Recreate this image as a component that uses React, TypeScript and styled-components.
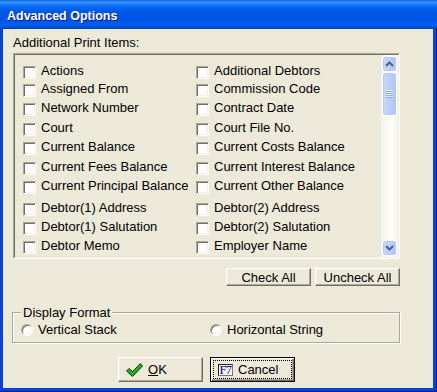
import styled, { createGlobalStyle } from 'styled-components'

const GlobalStyle = createGlobalStyle`
  html, body {
    margin: 0;
    padding: 0;
    background: #ece9d8;
  }
  body {
    font-family: "Liberation Sans", Arial, sans-serif;
    font-size: 13px;
    color: #000;
  }
`

const Window = styled.div`
  width: 437px;
  height: 392px;
  display: flex;
  flex-direction: column;
  background: #0842d6;
  box-shadow: inset -1px -1px 0 #001ea0;
`

const TitleBar = styled.div`
  height: 29px;
  box-sizing: border-box;
  padding: 9px 0 0 7px;
  background: linear-gradient(
    to bottom,
    #0a5ae8 0px,
    #3d95ff 2px,
    #1a80ff 4px,
    #0568f5 7px,
    #0058e6 11px,
    #0054e3 18px,
    #0058ea 22px,
    #0060f2 25px,
    #0052d6 27px,
    #003db5 29px
  );
`

const Title = styled.span`
  display: block;
  font-family: "Liberation Sans", Arial, sans-serif;
  font-weight: 700;
  font-size: 12.5px;
  line-height: 15px;
  color: #fff;
  text-shadow: 1px 1px 0 #0a1883;
`

const Body = styled.div`
  flex: 1;
  margin: 0 4px 4px 3px;
  padding: 6px 33px 0 9px;
  background: #ece9d8;
  display: flex;
  flex-direction: column;
`

const Caption = styled.div`
  margin-left: 1px;
  line-height: 15px;
`

const ListFrame = styled.div`
  margin: 3px 0 0 1px;
  height: 206px;
  box-sizing: border-box;
  border: 1px solid;
  border-color: #aca899 #fff #fff #aca899;
`

const ListInner = styled.div`
  height: 100%;
  box-sizing: border-box;
  border: 1px solid;
  border-color: #716f64 #f1efe2 #f1efe2 #716f64;
  display: flex;
  overflow: hidden;
`

const Items = styled.div`
  flex: 1;
  padding: 8px 0 0 8px;
  display: grid;
  grid-template-columns: 173px 1fr;
  grid-template-rows: 18px 19px 20px 19px 20px 19px 22px 19px 19px 19px;
  align-items: start;
  overflow: hidden;
`

const Item = styled.label`
  display: flex;
  align-items: flex-start;
  white-space: nowrap;
  line-height: 15px;
`

const CheckBox = styled.span`
  flex: none;
  width: 13px;
  height: 13px;
  box-sizing: border-box;
  margin: 3px 5px 0 0;
  background: #fff;
  border: 1px solid;
  border-color: #aca899 #fff #fff #aca899;
  box-shadow: inset 1px 1px 0 #716f64, inset -1px -1px 0 #f1efe2;
`

const ScrollBar = styled.div`
  width: 17px;
  display: flex;
  flex-direction: column;
  align-items: center;
  padding: 1px 0;
  box-sizing: border-box;
  background: linear-gradient(to right, #f3f1ec, #fefefb 60%, #f3f1ec);
`

const ScrollPart = styled.div<{ $h: number }>`
  width: 15px;
  height: ${({ $h }) => $h}px;
  box-sizing: border-box;
  border: 1px solid #fff;
  border-radius: 3px;
  background: linear-gradient(to right, #c9d8fc, #bccffb 50%, #aec4f7);
  box-shadow: inset 0 0 0 1px #b6c9f6;
  display: flex;
  align-items: center;
  justify-content: center;
  flex: none;
`

const Track = styled.div`
  flex: 1;
`

const Grip = styled.div`
  width: 7px;
  height: 8px;
  background: repeating-linear-gradient(
    to bottom,
    #eef3fe 0px,
    #eef3fe 1px,
    #8ca8ee 1px,
    #8ca8ee 2px
  );
`

const ButtonRow = styled.div<{ $top: number; $left?: number }>`
  display: flex;
  gap: ${({ $left }) => ($left ? 7 : 4)}px;
  justify-content: ${({ $left }) => ($left ? 'flex-start' : 'flex-end')};
  margin-top: ${({ $top }) => $top}px;
  padding-left: ${({ $left }) => $left ?? 0}px;
`

const Button = styled.button<{ $h: number; $default?: boolean }>`
  width: 85px;
  height: ${({ $h }) => $h}px;
  box-sizing: border-box;
  padding: 0;
  margin: 0;
  font-family: "Liberation Sans", Arial, sans-serif;
  font-size: 13px;
  line-height: 15px;
  color: #000;
  background: #ece9d8;
  border: 1px solid;
  border-color: ${({ $default }) =>
    $default ? '#000' : '#fff #716f64 #716f64 #fff'};
  box-shadow: ${({ $default }) =>
    $default
      ? 'inset 1px 1px 0 #fff, inset -1px -1px 0 #716f64, inset -2px -2px 0 #aca899'
      : 'inset -1px -1px 0 #aca899, inset 1px 1px 0 #f1efe2'};
  display: flex;
  align-items: stretch;
`

const Face = styled.span<{ $focus?: boolean }>`
  flex: 1;
  margin: 2px;
  padding-left: 4px;
  border: 1px ${({ $focus }) => ($focus ? 'dotted #000' : 'solid transparent')};
  display: flex;
  align-items: center;
  gap: 5px;
`

const CenteredFace = styled.span`
  flex: 1;
  display: flex;
  align-items: center;
  justify-content: center;
`

const KeyCap = styled.span`
  width: 15px;
  height: 12px;
  box-sizing: border-box;
  border: 1px solid;
  border-color: #222 #777 #777 #222;
  background: #f4f3ee;
  font-family: "Liberation Serif", "Times New Roman", serif;
  font-size: 12.5px;
  line-height: 10px;
  letter-spacing: -0.5px;
  color: #000080;
  text-align: center;
  overflow: hidden;
`

const GroupBox = styled.div`
  position: relative;
  margin-top: 26px;
  padding: 9px 0 5px 8px;
  border: 1px solid #aca899;
  box-shadow: inset 1px 1px 0 #fff, 1px 1px 0 #fff;
  display: grid;
  grid-template-columns: 189px 1fr;
`

const Legend = styled.span`
  position: absolute;
  top: -8px;
  left: 8px;
  padding: 0 2px;
  line-height: 15px;
  background: #ece9d8;
`

const Radio = styled.label`
  display: flex;
  align-items: center;
  line-height: 15px;
  white-space: nowrap;
`

const RadioDot = styled.span`
  flex: none;
  width: 12px;
  height: 12px;
  box-sizing: border-box;
  margin-right: 5px;
  border-radius: 50%;
  background: #fff;
  border: 1px solid;
  border-color: #aca899 #fff #fff #aca899;
  box-shadow: inset 1px 1px 0 #716f64, inset -1px -1px 0 #f1efe2;
`

const rows: [string, string][] = [
  ['Actions', 'Additional Debtors'],
  ['Assigned From', 'Commission Code'],
  ['Network Number', 'Contract Date'],
  ['Court', 'Court File No.'],
  ['Current Balance', 'Current Costs Balance'],
  ['Current Fees Balance', 'Current Interest Balance'],
  ['Current Principal Balance', 'Current Other Balance'],
  ['Debtor(1) Address', 'Debtor(2) Address'],
  ['Debtor(1) Salutation', 'Debtor(2) Salutation'],
  ['Debtor Memo', 'Employer Name'],
]

function Chevron({ up }: { up?: boolean }) {
  return (
    <svg width="9" height="6" viewBox="0 0 9 6">
      <polyline
        points={up ? '1,5 4.5,1.5 8,5' : '1,1 4.5,4.5 8,1'}
        fill="none"
        stroke="#4d6185"
        strokeWidth="2"
      />
    </svg>
  )
}

function CheckMark() {
  return (
    <svg width="17" height="14" viewBox="0 0 17 14">
      <path
        d="M0.5 8 L3 5.5 L6.5 8.5 L14.5 0.5 L16.5 3 L6.5 13.5 Z"
        fill="#22b022"
        stroke="#0b3d0b"
        strokeWidth="1"
        strokeLinejoin="round"
      />
    </svg>
  )
}

export default function App() {
  return (
    <>
      <GlobalStyle />
      <Window>
        <TitleBar>
          <Title>Advanced Options</Title>
        </TitleBar>
        <Body>
          <Caption>Additional Print Items:</Caption>
          <ListFrame>
            <ListInner>
              <Items>
                {rows.flatMap(pair =>
                  pair.map(text => (
                    <Item key={text}>
                      <CheckBox />
                      {text}
                    </Item>
                  ))
                )}
              </Items>
              <ScrollBar>
                <ScrollPart $h={16}>
                  <Chevron up />
                </ScrollPart>
                <ScrollPart $h={44}>
                  <Grip />
                </ScrollPart>
                <Track />
                <ScrollPart $h={16}>
                  <Chevron />
                </ScrollPart>
              </ScrollBar>
            </ListInner>
          </ListFrame>

          <ButtonRow $top={9}>
            <Button $h={18}>
              <CenteredFace>Check All</CenteredFace>
            </Button>
            <Button $h={18}>
              <CenteredFace>Uncheck All</CenteredFace>
            </Button>
          </ButtonRow>

          <GroupBox>
            <Legend>Display Format</Legend>
            <Radio>
              <RadioDot />
              Vertical Stack
            </Radio>
            <Radio>
              <RadioDot />
              Horizontal String
            </Radio>
          </GroupBox>

          <ButtonRow $top={14} $left={106}>
            <Button $h={25}>
              <Face>
                <CheckMark />
                <span>
                  <u>O</u>K
                </span>
              </Face>
            </Button>
            <Button $h={25} $default>
              <Face $focus>
                <KeyCap>F7</KeyCap>
                <span>Cancel</span>
              </Face>
            </Button>
          </ButtonRow>
        </Body>
      </Window>
    </>
  )
}
